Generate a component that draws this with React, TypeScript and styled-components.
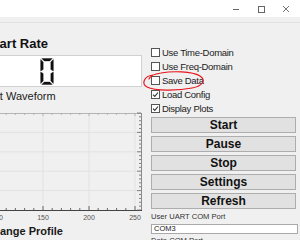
import React from "react";
import styled, { createGlobalStyle } from "styled-components";

const GlobalStyle = createGlobalStyle`
  body {
    margin: 0;
    background: #f0f0f0;
    overflow: hidden;
    font-family: "Liberation Sans", Arial, sans-serif;
  }
`;

const Window = styled.div`
  position: relative;
  width: 300px;
  height: 240px;
  overflow: hidden;
  background: #f0f0f0;
  color: #1e1e1e;
`;

const TitleBar = styled.div`
  height: 17px;
  background: #ffffff;
  display: flex;
  justify-content: flex-end;
  align-items: center;
  gap: 17px;
  padding-right: 10px;
`;

const MenuBand = styled.div`
  height: 5px;
  background: #f0f0f0;
  border-bottom: 1px solid #e2e2e2;
`;

const Body = styled.div`
  display: flex;
`;

const LeftPanel = styled.div`
  flex-shrink: 0;
  width: 243px;
  margin-left: -100px;
  display: flex;
  flex-direction: column;
`;

const Heading = styled.div`
  margin-top: 13px;
  padding-left: 83px;
  font-size: 13px;
  line-height: 15px;
  font-weight: bold;
  color: #111;
`;

const GroupTitle = styled.div<{ $indent: number; $gap: number; $bold?: boolean }>`
  margin-top: ${(p) => p.$gap}px;
  padding-left: ${(p) => p.$indent}px;
  font-size: 11px;
  line-height: 13px;
  font-weight: ${(p) => (p.$bold ? "bold" : "normal")};
  color: #1a1a1a;
  white-space: nowrap;
`;

const Display = styled.div`
  margin: 4px 1px 0 51px;
  height: 30px;
  background: #ffffff;
  border: 1px solid #d0d0d0;
  display: flex;
  justify-content: center;
  align-items: center;
`;

const Chart = styled.svg`
  display: block;
  width: 243px;
  height: 119px;
`;

const RightPanel = styled.div`
  flex-shrink: 0;
  width: 146px;
  margin-left: 7px;
  padding-top: 22px;
  display: flex;
  flex-direction: column;
`;

const CheckRow = styled.label`
  height: 14px;
  display: flex;
  align-items: center;
  gap: 2px;
  padding-left: 1px;
  font-size: 9.5px;
  letter-spacing: -0.3px;
  color: #222;
  white-space: nowrap;
`;

const Box = styled.span`
  width: 7px;
  height: 7px;
  border: 1px solid #555;
  background: #fff;
  display: flex;
  align-items: center;
  justify-content: center;
`;

const Buttons = styled.div`
  margin-top: 2px;
  padding-left: 1px;
  display: flex;
  flex-direction: column;
  gap: 3px;
`;

const Button = styled.button`
  height: 16px;
  width: 145px;
  padding: 0;
  background: #e1e1e1;
  border: 1px solid #adadad;
  font-family: "Liberation Sans", Arial, sans-serif;
  font-size: 12px;
  font-weight: bold;
  color: #111;
  line-height: 14px;
`;

const FieldLabel = styled.div<{ $gap: number }>`
  margin-top: ${(p) => p.$gap}px;
  padding-left: 1px;
  font-size: 7.6px;
  line-height: 10px;
  color: #333;
`;

const Field = styled.div`
  margin: 2px 0 0 1px;
  height: 8px;
  width: 143px;
  background: #fff;
  border: 1px solid #a9a9a9;
  font-size: 7.5px;
  line-height: 8px;
  padding-left: 2px;
  color: #222;
`;

const Annotation = styled.svg`
  position: absolute;
  left: 0;
  top: 0;
  pointer-events: none;
`;

const Minimize = () => (
  <svg width="8" height="8" viewBox="0 0 8 8">
    <path d="M1 4.5 H7" stroke="#666" strokeWidth="1" />
  </svg>
);
const Maximize = () => (
  <svg width="8" height="8" viewBox="0 0 8 8">
    <rect x="1.5" y="1.5" width="6" height="6" fill="none" stroke="#666" strokeWidth="1" />
  </svg>
);
const Close = () => (
  <svg width="8" height="8" viewBox="0 0 8 8">
    <path d="M1 1 L7 7 M7 1 L1 7" stroke="#666" strokeWidth="0.9" />
  </svg>
);

const SevenSegZero = () => (
  <svg width="14" height="27" viewBox="0 0 13 26">
    <g fill="#111" stroke="#111" strokeWidth="0.4" strokeLinejoin="round">
      <polygon points="1.5,0.4 11.5,0.4 9.2,2.8 3.8,2.8" />
      <polygon points="0.4,1.5 2.8,3.8 2.8,11 0.4,12.4" />
      <polygon points="12.6,1.5 12.6,12.4 10.2,11 10.2,3.8" />
      <polygon points="0.4,13.6 2.8,15 2.8,22.2 0.4,24.5" />
      <polygon points="12.6,13.6 12.6,24.5 10.2,22.2 10.2,15" />
      <polygon points="1.5,25.6 3.8,23.2 9.2,23.2 11.5,25.6" />
    </g>
  </svg>
);

const Check = () => (
  <svg width="7" height="7" viewBox="0 0 7 7">
    <path d="M1 3.6 L2.8 5.4 L6 1.5" fill="none" stroke="#333" strokeWidth="1.1" />
  </svg>
);

const xs = (v: number) => 143 + (v - 150) * 0.92;
const TOP = 10;
const BOTTOM = 107;
const RIGHT = 241;
const LEFT = 5;
const ROW = (BOTTOM - TOP) / 5;

const WaveChart = () => {
  const minorX: number[] = [];
  for (let v = 0; v <= 256; v += 10) minorX.push(v);
  const minorY: number[] = [];
  for (let i = 0; i <= 25; i++) minorY.push(TOP + (i * ROW) / 5);
  return (
    <Chart viewBox="0 0 243 119">
      {[50, 100, 150, 200, 250].map((v) => (
        <line key={v} x1={xs(v)} x2={xs(v)} y1={TOP} y2={BOTTOM} stroke="#e2e2e2" strokeWidth="1" />
      ))}
      {[1, 2, 3, 4].map((i) => (
        <line key={i} x1={LEFT} x2={RIGHT} y1={TOP + i * ROW} y2={TOP + i * ROW} stroke="#e2e2e2" strokeWidth="1" />
      ))}
      <line x1={LEFT} x2={RIGHT} y1={TOP + 0.5} y2={TOP + 0.5} stroke="#b4b4b4" />
      <line x1={RIGHT + 0.5} x2={RIGHT + 0.5} y1={TOP} y2={BOTTOM} stroke="#8a8a8a" />
      <line x1={LEFT} x2={RIGHT + 1} y1={BOTTOM + 0.5} y2={BOTTOM + 0.5} stroke="#444" />
      {minorX.map((v) => (
        <g key={v}>
          <line x1={xs(v)} x2={xs(v)} y1={BOTTOM} y2={BOTTOM - (v % 50 === 0 ? 4 : 2)} stroke="#444" strokeWidth="0.8" />
          <line x1={xs(v)} x2={xs(v)} y1={TOP} y2={TOP + (v % 50 === 0 ? 3 : 2)} stroke="#aaa" strokeWidth="0.8" />
        </g>
      ))}
      {minorY.map((y, i) => (
        <line key={i} x1={RIGHT} x2={RIGHT - (i % 5 === 0 ? 4 : 2)} y1={y} y2={y} stroke="#666" strokeWidth="0.8" />
      ))}
      {[100, 150, 200, 250].map((v) => (
        <text key={v} x={xs(v)} y={116.5} fontSize="7" fill="#555" textAnchor="middle" fontFamily="Liberation Sans, Arial, sans-serif">
          {v}
        </text>
      ))}
    </Chart>
  );
};

const options = [
  { label: "Use Time-Domain", checked: false },
  { label: "Use Freq-Domain", checked: false },
  { label: "Save Data", checked: false },
  { label: "Load Config", checked: true },
  { label: "Display Plots", checked: true },
];

const actions = ["Start", "Pause", "Stop", "Settings", "Refresh"];

export default function App() {
  return (
    <Window>
      <GlobalStyle />
      <TitleBar>
        <Minimize />
        <Maximize />
        <Close />
      </TitleBar>
      <MenuBand />
      <Body>
        <LeftPanel>
          <Heading>Heart Rate</Heading>
          <Display>
            <SevenSegZero />
          </Display>
          <GroupTitle $indent={76} $gap={3}>Heart Waveform</GroupTitle>
          <WaveChart />
          <GroupTitle $indent={92} $gap={3} $bold>Range Profile</GroupTitle>
        </LeftPanel>
        <RightPanel>
          {options.map((o) => (
            <CheckRow key={o.label}>
              <Box>{o.checked && <Check />}</Box>
              {o.label}
            </CheckRow>
          ))}
          <Buttons>
            {actions.map((a) => (
              <Button key={a}>{a}</Button>
            ))}
          </Buttons>
          <FieldLabel $gap={3}>User UART COM Port</FieldLabel>
          <Field>COM3</Field>
          <FieldLabel $gap={2}>Data COM Port</FieldLabel>
        </RightPanel>
      </Body>
      <Annotation width="300" height="240" viewBox="0 0 300 240">
        <path
          d="M153 75 C144 76 141 84 147 87 C155 91 178 91 192 88 C203 86 206 80 200 76 C192 71 172 71 161 73 C154 74 150 76 149 79"
          fill="none"
          stroke="#e8141a"
          strokeWidth="1.2"
          strokeLinecap="round"
        />
      </Annotation>
    </Window>
  );
}
